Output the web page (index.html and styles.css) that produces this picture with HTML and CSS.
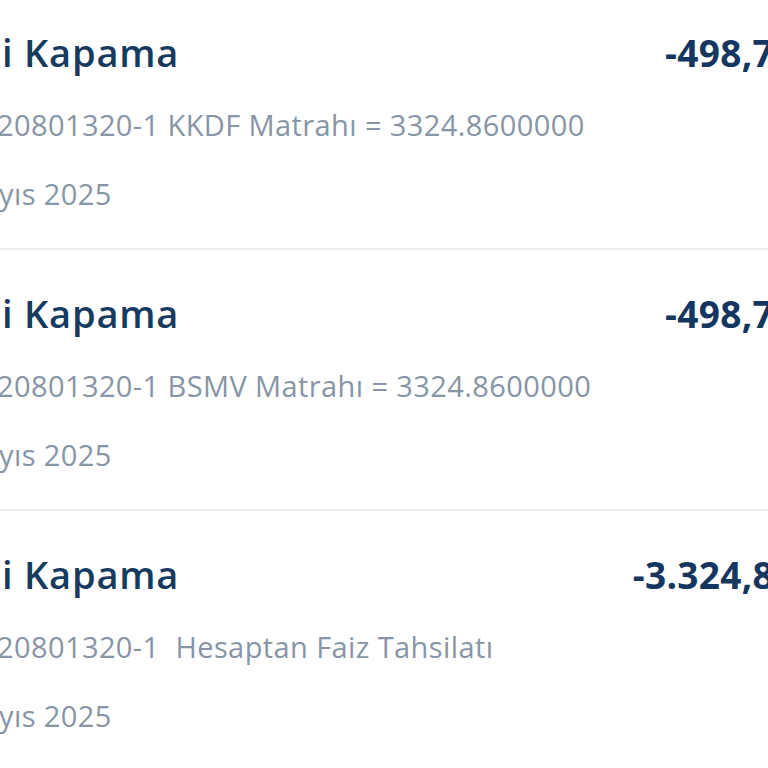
FILE: index.html
```html
<!DOCTYPE html>
<html lang="tr">
<head>
<meta charset="utf-8">
<link rel="stylesheet" href="styles.css">
</head>
<body>
<ul class="list">
  <li class="row">
    <div class="head">
      <span class="title">i Kapama</span>
      <span class="amount">-498,7</span>
    </div>
    <div class="desc">20801320-1 KKDF Matrahı = 3324.8600000</div>
    <div class="date">yıs 2025</div>
  </li>
  <li class="row">
    <div class="head">
      <span class="title">i Kapama</span>
      <span class="amount">-498,7</span>
    </div>
    <div class="desc">20801320-1 BSMV Matrahı = 3324.8600000</div>
    <div class="date">yıs 2025</div>
  </li>
  <li class="row">
    <div class="head">
      <span class="title">i Kapama</span>
      <span class="amount">-3.324,8</span>
    </div>
    <div class="desc">20801320-1&nbsp; Hesaptan Faiz Tahsilatı</div>
    <div class="date">yıs 2025</div>
  </li>
</ul>
</body>
</html>
```

FILE: styles.css
```css
html, body {
  margin: 0;
  padding: 0;
  background: #ffffff;
  overflow: hidden;
}
body {
  font-family: "Open Sans", "Noto Sans", sans-serif;
  width: 768px;
  height: 768px;
}
.list {
  list-style: none;
  margin: 0;
  padding: 0;
}
.row {
  display: flex;
  flex-direction: column;
  padding: 38px 0 29px 0;
  border-bottom: 2px solid #ececec;
}
.row:first-child {
  padding-top: 27px;
}
.head {
  display: flex;
  justify-content: space-between;
  align-items: center;
  height: 50px;
}
.title {
  font-size: 38px;
  font-weight: 600;
  letter-spacing: 0.8px;
  color: #163a60;
  margin-left: 2px;
  white-space: nowrap;
}
.amount {
  font-size: 37px;
  font-weight: 700;
  letter-spacing: 0.3px;
  color: #143660;
  margin-right: -6px;
  white-space: nowrap;
}
.desc {
  margin-top: 23px;
  height: 50px;
  line-height: 50px;
  font-size: 29px;
  font-weight: 500;
  letter-spacing: 0.4px;
  color: #8795a6;
  margin-left: -3px;
  white-space: nowrap;
}
.date {
  margin-top: 19px;
  height: 50px;
  line-height: 50px;
  font-size: 29px;
  font-weight: 500;
  letter-spacing: 0.4px;
  color: #8795a6;
  margin-left: -1px;
  white-space: nowrap;
}
```
